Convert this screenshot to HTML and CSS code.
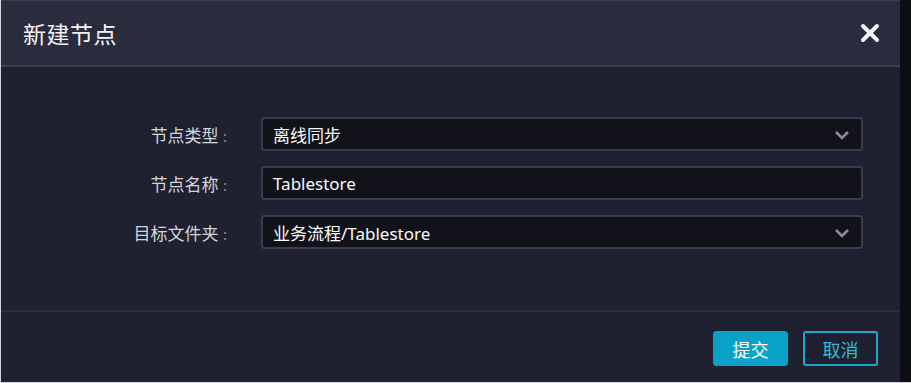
FILE: index.html
```html
<!DOCTYPE html>
<html lang="zh-CN">
<head>
    <meta charset="UTF-8">
    <meta name="viewport" content="width=device-width, initial-scale=1.0">
    <title>新建节点</title>
    <link rel="stylesheet" href="styles.css">
</head>
<body>
    <div class="frame">
        <div class="dialog">
            <div class="dialog-header">
                <h2>新建节点</h2>
                <span class="close">
                    <svg width="20" height="20" viewBox="0 0 20 20">
                        <path d="M3 3 L17 17 M17 3 L3 17" stroke="#f2f2f8" stroke-width="4" stroke-linecap="round" fill="none"/>
                    </svg>
                </span>
            </div>

            <div class="dialog-body">
                <div class="form-row">
                    <label>节点类型 <span class="colon">:</span></label>
                    <div class="field select">
                        <span>离线同步</span>
                        <svg class="arrow" width="16" height="10" viewBox="0 0 16 10">
                            <path d="M2 2 L8 8 L14 2" stroke="#8b8d9c" stroke-width="2.6" fill="none"/>
                        </svg>
                    </div>
                </div>
                <div class="form-row">
                    <label>节点名称 <span class="colon">:</span></label>
                    <div class="field">
                        <span>Tablestore</span>
                    </div>
                </div>
                <div class="form-row">
                    <label>目标文件夹 <span class="colon">:</span></label>
                    <div class="field select">
                        <span>业务流程/Tablestore</span>
                        <svg class="arrow" width="16" height="10" viewBox="0 0 16 10">
                            <path d="M2 2 L8 8 L14 2" stroke="#8b8d9c" stroke-width="2.6" fill="none"/>
                        </svg>
                    </div>
                </div>
            </div>

            <div class="dialog-footer">
                <button class="btn-primary">提交</button>
                <button class="btn-cancel">取消</button>
            </div>
        </div>
        <div class="side"></div>
    </div>
</body>
</html>
```

FILE: styles.css
```css
body {
    margin: 0;
    background-color: #d4d4d8;
    font-family: "Noto Sans", "Noto Sans CJK SC", sans-serif;
    color: #fff;
}

.frame {
    display: flex;
    width: 910px;
    height: 382px;
    margin-left: 1px;
    background-color: #0d0e13;
}

.dialog {
    width: 899px;
    display: flex;
    flex-direction: column;
    background-color: #1f2130;
    border-top: 1px solid #3a3c4a;
}

.side {
    flex: 1;
    background-color: #0d0e13;
}

.dialog-header {
    height: 64px;
    display: flex;
    align-items: center;
    justify-content: space-between;
    padding: 0 20px 0 22px;
    background-color: #2a2c3e;
    border-bottom: 2px solid #3b3e54;
}

.dialog-header h2 {
    margin: 0;
    font-size: 23px;
    font-weight: normal;
    color: #f4f4f8;
    letter-spacing: 0.5px;
}

.close {
    display: flex;
}

.dialog-body {
    flex: 1;
    display: flex;
    flex-direction: column;
    gap: 15px;
    padding: 50px 37px 0 0;
    border-bottom: 2px solid #2b2d3b;
}

.form-row {
    display: flex;
    align-items: center;
}

.form-row label {
    width: 226px;
    text-align: right;
    font-size: 17px;
    color: #d4d5dc;
    margin-right: 34px;
}

.colon {
    color: #8d8f9c;
    font-size: 15px;
}

.field {
    flex: 1;
    height: 30px;
    display: flex;
    align-items: center;
    justify-content: space-between;
    padding: 0 11px 0 10px;
    background-color: #11121a;
    border: 2px solid #3a3c4c;
    border-radius: 3px;
    font-size: 17px;
    color: #fafafa;
}

.arrow {
    margin-top: 2px;
}

.dialog-footer {
    display: flex;
    justify-content: flex-end;
    gap: 15px;
    padding: 19px 22px 0 0;
    height: 51px;
}

.dialog-footer button {
    width: 75px;
    height: 35px;
    border-radius: 3px;
    font-family: "Noto Sans CJK SC", sans-serif;
    font-size: 18px;
    cursor: pointer;
}

.btn-primary {
    background-color: #0aa3c7;
    border: 1px solid #0aa3c7;
    color: #fff;
}

.btn-cancel {
    background-color: transparent;
    border: 2px solid #1ba8ca;
    color: #37b8d6;
}
```
